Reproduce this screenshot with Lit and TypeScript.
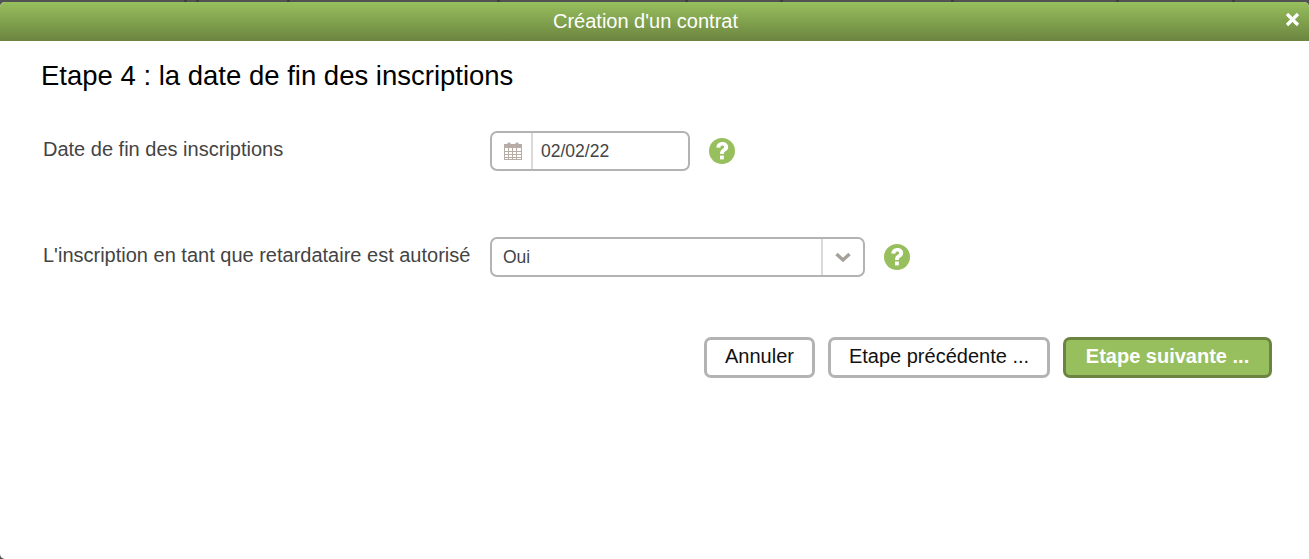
import { LitElement, css, html } from "lit";
import { customElement } from "lit/decorators.js";

const helpIcon = html`
  <svg class="help" viewBox="0 0 26 26" aria-hidden="true">
    <circle cx="13" cy="13" r="13" fill="#97bf5d"></circle>
    <path d="M7.300 9.600C7.500 6 10 3.900 13.300 3.900c3.400 0 5.900 2 5.900 5 0 2.200-1.200 3.400-2.700 4.400-1.300.9-1.700 1.400-1.700 2.700h-3.700c-.1-2.500.6-3.700 2.300-4.900 1.100-.8 1.800-1.200 1.800-2.100 0-1-.7-1.600-1.800-1.600-1.200 0-2 .8-2.100 2.300z" fill="#fff"></path>
    <rect x="11.050" y="17.500" width="3.800" height="3.900" fill="#fff"></rect>
  </svg>
`;

const calendarIcon = html`
  <svg class="calendar" viewBox="0 0 18 18" aria-hidden="true">
    <rect x="0.500" y="2.500" width="17" height="15" fill="#fff" stroke="#b8aca6"></rect>
    <rect x="1" y="3" width="16" height="3" fill="#b8aca6"></rect>
    <rect x="3.500" y="0.500" width="3" height="4" rx="1" fill="#b8aca6"></rect>
    <rect x="11.500" y="0.500" width="3" height="4" rx="1" fill="#b8aca6"></rect>
    <path d="M1 9.500h16M1 12.500h16M1 15.500h16M4.500 6v11M8.500 6v11M12.500 6v11" stroke="#b8aca6" fill="none"></path>
  </svg>
`;

@customElement("app-root")
export class AppRoot extends LitElement {
  static styles = css`
    :host {
      display: block;
      height: 559px;
      overflow: hidden;
      background: #525252;
      font-family: "Liberation Sans", Arial, sans-serif;
    }
    .backdrop {
      height: 2px;
      /* column edges of the page behind the dialog */
      background: linear-gradient(
        90deg,
        #525252 184px, #3d3d3d 184px 187px,
        #525252 187px 196px, #3d3d3d 196px 199px,
        #525252 199px 287px, #3d3d3d 287px 290px,
        #525252 290px 497px, #3d3d3d 497px 500px,
        #525252 500px 685px, #3d3d3d 685px 688px,
        #525252 688px 780px, #3d3d3d 780px 783px,
        #525252 783px 951px, #3d3d3d 951px 954px,
        #525252 954px 1116px, #3d3d3d 1116px 1119px,
        #525252 1119px 1232px, #3d3d3d 1232px 1235px,
        #525252 1235px
      );
    }
    .dialog {
      display: flex;
      flex-direction: column;
      height: 557px;
      border-radius: 5px 5px 0 5px;
      background: #fff;
      overflow: hidden;
    }
    .titlebar {
      position: relative;
      flex: none;
      height: 39px;
      padding-right: 18px;
      background: linear-gradient(#97bf5d, #6b843f);
      color: #fff;
      font-size: 20px;
      line-height: 38px;
      text-align: center;
    }
    .close {
      position: absolute;
      top: 10px;
      right: 9px;
      width: 15px;
      height: 15px;
    }
    .content {
      padding: 18px 37px 0 41px;
    }
    h1 {
      margin: 0;
      color: #000;
      font-size: 27.500px;
      font-weight: 400;
      line-height: 33px;
    }
    .row {
      display: flex;
      align-items: flex-start;
      margin-top: 39px;
      padding-left: 2px;
    }
    .row + .row {
      margin-top: 66px;
    }
    .label {
      flex: none;
      width: 447px;
      color: #444;
      font-size: 20px;
      line-height: 36px;
    }
    .field {
      box-sizing: border-box;
      display: flex;
      align-items: stretch;
      height: 40px;
      border: 2px solid #b3b3b3;
      border-radius: 7px;
      background: #fff;
      color: #444;
      font-size: 17.500px;
    }
    .date {
      width: 200px;
    }
    .select {
      width: 375px;
    }
    .addon {
      display: flex;
      flex: none;
      align-items: center;
      justify-content: center;
      box-sizing: border-box;
      width: 41px;
      padding-left: 3px;
      border-right: 2px solid #d9d9d9;
    }
    .calendar {
      width: 18px;
      height: 18px;
    }
    .value {
      flex: 1;
      line-height: 36px;
      padding-left: 8px;
    }
    .select .value {
      padding-left: 11px;
    }
    .caret {
      display: flex;
      flex: none;
      align-items: center;
      justify-content: center;
      width: 40px;
      border-left: 2px solid #d9d9d9;
    }
    .caret svg {
      width: 18px;
      height: 12px;
    }
    .help {
      flex: none;
      width: 26px;
      height: 26px;
      margin: 7px 0 0 19px;
    }
    .actions {
      display: flex;
      justify-content: flex-end;
      gap: 13px;
      margin-top: 60px;
    }
    button {
      box-sizing: border-box;
      flex: none;
      height: 41px;
      padding: 0 0 2px;
      border: 3px solid #b3b3b3;
      border-radius: 7px;
      background: #fff;
      color: #111;
      font: 400 20px "Liberation Sans", Arial, sans-serif;
    }
    .cancel {
      width: 111px;
    }
    .back {
      width: 222px;
    }
    button.primary {
      width: 209px;
      border-color: #6b843f;
      background: #97bf5d;
      color: #fff;
      font-weight: 700;
    }
  `;

  render() {
    return html`
      <div class="backdrop"></div>
      <div class="dialog">
        <header class="titlebar">
          Création d'un contrat
          <svg class="close" viewBox="0 0 15 15" aria-hidden="true">
            <path d="M2 2l11 11M13 2L2 13" stroke="#fff" stroke-width="3.200" fill="none"></path>
          </svg>
        </header>
        <main class="content">
          <h1>Etape 4 : la date de fin des inscriptions</h1>
          <div class="row">
            <div class="label">Date de fin des inscriptions</div>
            <div class="field date">
              <span class="addon">${calendarIcon}</span>
              <span class="value">02/02/22</span>
            </div>
            ${helpIcon}
          </div>
          <div class="row">
            <div class="label">L'inscription en tant que retardataire est autorisé</div>
            <div class="field select">
              <span class="value">Oui</span>
              <span class="caret">
                <svg viewBox="0 0 18 12" aria-hidden="true">
                  <path d="M2.500 3l6.500 6 6.500-6" stroke="#a6a09b" stroke-width="3.400" fill="none"></path>
                </svg>
              </span>
            </div>
            ${helpIcon}
          </div>
          <div class="actions">
            <button class="cancel">Annuler</button>
            <button class="back">Etape précédente ...</button>
            <button class="primary">Etape suivante ...</button>
          </div>
        </main>
      </div>
    `;
  }
}

declare global {
  interface HTMLElementTagNameMap {
    "app-root": AppRoot;
  }
}
